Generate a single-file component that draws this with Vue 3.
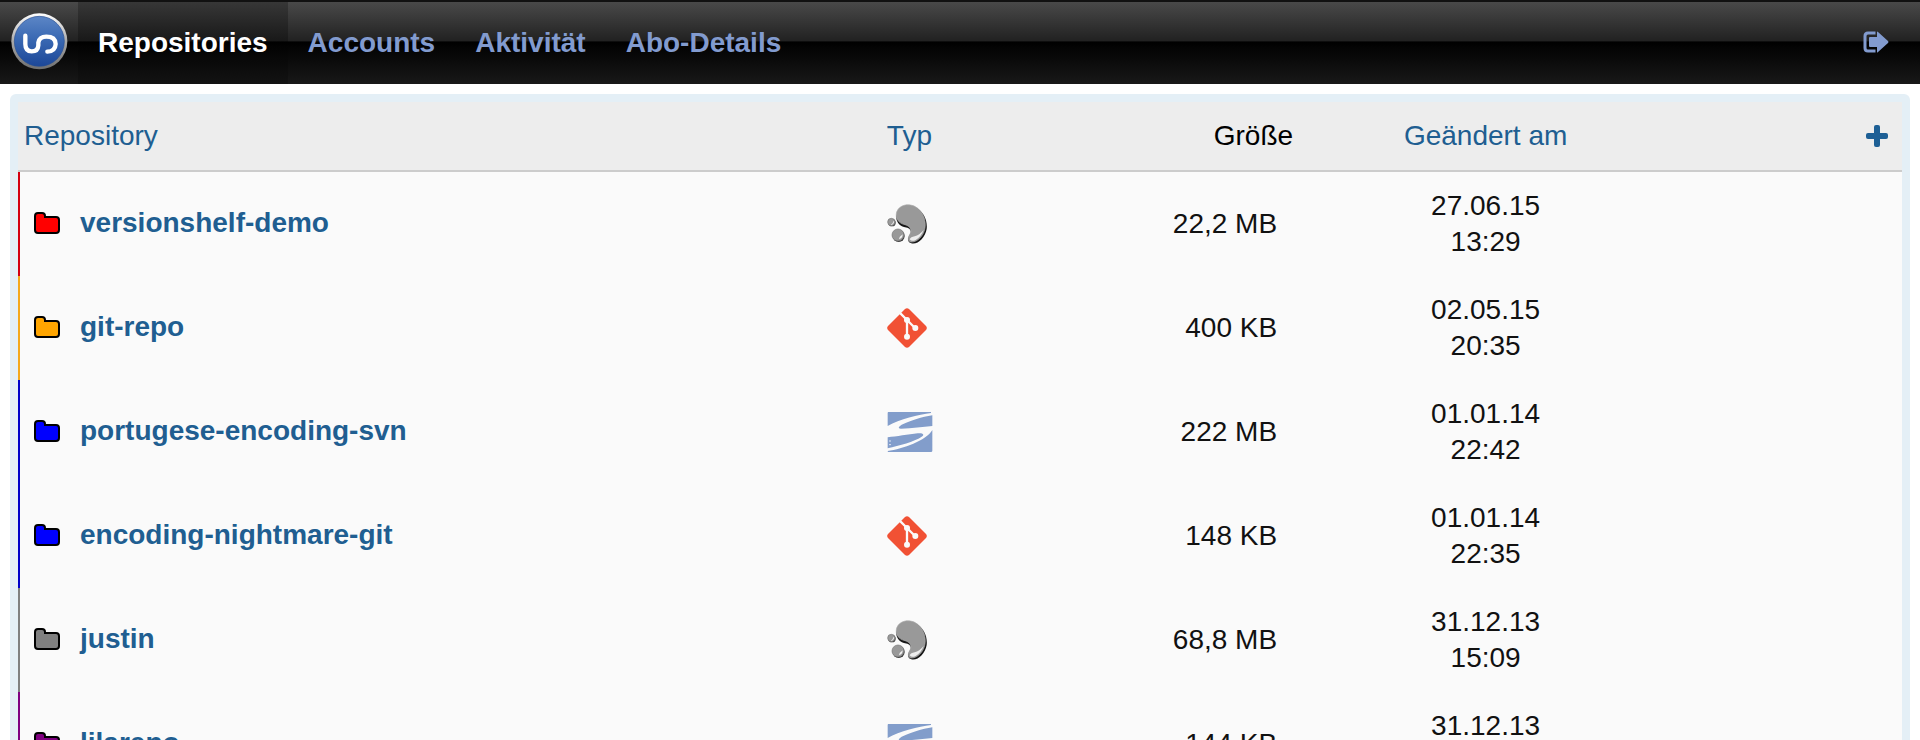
<script setup>
const navItems = [
  { label: 'Repositories', active: true },
  { label: 'Accounts', active: false },
  { label: 'Aktivität', active: false },
  { label: 'Abo-Details', active: false },
]

const repos = [
  { name: 'versionshelf-demo', tone: 'red', type: 'hg', size: '22,2 MB', date: '27.06.15', time: '13:29' },
  { name: 'git-repo', tone: 'orange', type: 'git', size: '400 KB', date: '02.05.15', time: '20:35' },
  { name: 'portugese-encoding-svn', tone: 'blue', type: 'svn', size: '222 MB', date: '01.01.14', time: '22:42' },
  { name: 'encoding-nightmare-git', tone: 'blue', type: 'git', size: '148 KB', date: '01.01.14', time: '22:35' },
  { name: 'justin', tone: 'gray', type: 'hg', size: '68,8 MB', date: '31.12.13', time: '15:09' },
  { name: 'lilarepo', tone: 'purple', type: 'svn', size: '144 KB', date: '31.12.13', time: '15:07' },
]
</script>

<template>
  <div class="page">
    <header class="topbar">
      <a class="brand" href="#" aria-label="Startseite">
        <svg width="60" height="60" viewBox="0 0 180 180">
          <defs>
            <linearGradient id="rim" x1="0" y1="0" x2="0" y2="1">
              <stop offset="0" stop-color="#ffffff" />
              <stop offset="0.5" stop-color="#a9a9a9" />
              <stop offset="1" stop-color="#6f6f6f" />
            </linearGradient>
            <linearGradient id="disc" x1="0" y1="0" x2="0" y2="1">
              <stop offset="0" stop-color="#5c86c6" />
              <stop offset="0.45" stop-color="#3a69b3" />
              <stop offset="1" stop-color="#1c4798" />
            </linearGradient>
          </defs>
          <circle cx="88" cy="88" r="84" fill="url(#rim)" />
          <circle cx="88" cy="88" r="75" fill="url(#disc)" stroke="#274f93" stroke-width="2" />
          <path
            d="M46 71V96Q46 118 65 118Q84 118 85 100V92Q88 74 109 74Q136 74 137 96Q136 118 112 119"
            fill="none" stroke="#fff" stroke-width="13" stroke-linecap="round" stroke-linejoin="round"
          />
        </svg>
      </a>
      <nav class="nav">
        <a v-for="item in navItems" :key="item.label" href="#" class="nav-link" :class="{ active: item.active }">{{ item.label }}</a>
      </nav>
      <button class="icon-button logout" type="button" aria-label="Abmelden">
        <svg width="26" height="22" viewBox="0 0 26 22">
          <path d="M11 2H5Q2 2 2 5V17Q2 20 5 20H11" fill="none" stroke="#829bcf" stroke-width="3" stroke-linecap="square" />
          <path d="M6 7Q6 6 7 6H14V1Q14 0 15 1L25 10Q26 11 25 12L15 21Q14 22 14 21V16H7Q6 16 6 15Z" fill="#829bcf" />
        </svg>
      </button>
    </header>

    <main class="panel">
      <table class="repos">
        <colgroup>
          <col class="col-name" />
          <col class="col-type" />
          <col class="col-size" />
          <col class="col-date" />
          <col class="col-add" />
        </colgroup>
        <thead>
          <tr>
            <th scope="col"><a href="#">Repository</a></th>
            <th scope="col"><a href="#">Typ</a></th>
            <th scope="col" class="size">Größe</th>
            <th scope="col" class="date"><a href="#">Geändert am</a></th>
            <th scope="col" class="add">
              <button class="icon-button" type="button" aria-label="Neues Repository">
                <svg width="22" height="22" viewBox="0 0 22 22" fill="#1d5f95">
                  <rect x="8" y="0" width="6" height="22" rx="2" />
                  <rect x="0" y="8" width="22" height="6" rx="2" />
                </svg>
              </button>
            </th>
          </tr>
        </thead>
        <tbody>
          <tr v-for="repo in repos" :key="repo.name" :class="repo.tone">
            <td class="name">
              <div class="name-line">
                <svg class="folder" width="26" height="22" viewBox="0 0 26 22">
                  <path
                    d="M1 4Q1 1 4 1H8Q11 1 11 4V5H22Q25 5 25 8V18Q25 21 22 21H4Q1 21 1 18Z"
                    stroke="#000" stroke-width="2"
                  />
                </svg>
                <a href="#">{{ repo.name }}</a>
              </div>
            </td>
            <td class="type">
              <svg v-if="repo.type === 'hg'" width="40" height="40" viewBox="18 24 120 120" role="img" aria-label="Mercurial">
                <circle cx="33" cy="80" r="11" fill="#333" />
                <circle cx="31" cy="78" r="11" fill="#999" stroke="#777" stroke-width="2" />
                <path d="M31 86Q38 84 38 76" fill="none" stroke="#eee" stroke-width="3" />
                <circle cx="53" cy="120" r="18" fill="#333" />
                <circle cx="51" cy="117" r="18" fill="#999" stroke="#777" stroke-width="2" />
                <path d="M54 130Q65 127 65 115Q56 121 54 130Z" fill="#f4f4f4" />
                <path
                  d="M49 52C58 26 84 24 103 34C128 47 140 73 137 99C133 125 110 147 91 142C77 138 80 124 88 114C93 104 86 96 72 94C52 90 40 70 49 52Z"
                  fill="#161616"
                />
                <path
                  d="M47 48C55 26 82 22 101 31C125 44 136 70 132 96C128 121 107 140 89 138C78 134 82 122 88 112C93 99 86 90 72 86C52 82 42 66 47 48Z"
                  fill="#999" stroke="#aaa" stroke-width="2"
                />
                <path d="M86 130Q89 123 101 121Q115 118 128 102Q120 123 104 132Q92 138 86 130Z" fill="#ededed" />
              </svg>
              <svg v-else-if="repo.type === 'git'" width="40" height="40" viewBox="0 0 120 120" role="img" aria-label="Git">
                <path d="M54 3Q60 -2 66 3L117 54Q122 60 117 66L66 117Q60 122 54 117L3 66Q-2 60 3 54Z" fill="#f15134" />
                <path d="M38 14L60 36L84 60M60 36V84" fill="none" stroke="#fafafa" stroke-width="7" />
                <circle cx="60" cy="36" r="9" fill="#fafafa" />
                <circle cx="85" cy="60" r="9" fill="#fafafa" />
                <circle cx="60" cy="86" r="9" fill="#fafafa" />
              </svg>
              <svg v-else width="46" height="40" viewBox="0 0 138 120" role="img" aria-label="Subversion">
                <g fill="#829dcb">
                  <path d="M4 0H132V3C95 7 38 22 2 42V4Q2 0 4 0Z" />
                  <path d="M136 10V42C107 44 76 49 42 50C31 50 34 43 49 36C70 26 105 15 136 10Z" />
                  <path d="M2 76C28 73 64 68 92 64C109 62 114 69 103 75C82 89 37 101 2 109Z" />
                  <path d="M136 54V116Q136 120 132 120H4Q2 120 2 117C48 110 117 87 136 54Z" />
                </g>
                <path d="M6 87H12M6 98H12" stroke="#dfe7f4" stroke-width="3" />
              </svg>
            </td>
            <td class="size">{{ repo.size }}</td>
            <td class="date">{{ repo.date }}<br />{{ repo.time }}</td>
            <td></td>
          </tr>
        </tbody>
      </table>
    </main>
  </div>
</template>

<style>
html {
  scrollbar-width: none;
}

body {
  margin: 0;
  background: #fff;
}
</style>

<style scoped>
.page {
  font-family: "Liberation Sans", Arial, Helvetica, sans-serif;
  font-size: 28px;
  line-height: 36px;
  color: #111;
}

a {
  color: #205e91;
  text-decoration: none;
}

svg {
  display: block;
}

.topbar {
  display: flex;
  align-items: stretch;
  box-sizing: border-box;
  height: 84px;
  border-top: 2px solid #111;
  background: linear-gradient(#494949, #222 47%, #000 49%, #030303 54%, #181818);
}

.brand {
  box-sizing: border-box;
  width: 78px;
  padding: 10px;
}

.nav {
  display: flex;
}

.nav-link {
  display: flex;
  align-items: center;
  padding: 0 20px;
  font-weight: bold;
  color: #829bcf;
}

.nav-link.active {
  color: #fff;
  background: linear-gradient(#373737, #191919 47%, #000 49%, #030303 54%, #131313);
}

.icon-button {
  padding: 0;
  border: 0;
  background: none;
  cursor: pointer;
}

.logout {
  margin-left: auto;
  padding: 0 31px 2px;
}

.panel {
  margin: 10px;
  padding: 8px;
  border-radius: 6px;
  background: #e4eff6;
}

.repos {
  width: 100%;
  table-layout: fixed;
  border-collapse: separate;
  border-spacing: 0;
  background: #fafafa;
}

.col-name {
  width: 45.8%;
}

.col-type {
  width: 10%;
}

.col-size {
  width: 12.2%;
}

.col-date {
  width: 19.8%;
}

th {
  padding: 16px 6px;
  border-bottom: 2px solid #ccc;
  background: #ededed;
  font-weight: normal;
  text-align: left;
  color: #000;
}

td {
  padding: 16px 6px;
}

.size {
  text-align: right;
}

td.size {
  padding-right: 22px;
}

.date {
  text-align: center;
}

.add .icon-button {
  display: block;
  margin: 0 8px 0 auto;
}

.name {
  padding: 15px 14px 17px;
  border-left: 2px solid;
  font-weight: bold;
}

.name-line {
  display: flex;
  align-items: center;
  gap: 20px;
}

.red .name { border-color: #d40010; }
.orange .name { border-color: #f5a81c; }
.blue .name { border-color: #0000c8; }
.gray .name { border-color: #808080; }
.purple .name { border-color: #800080; }

.red .folder { fill: #f00; }
.orange .folder { fill: #ffa500; }
.blue .folder { fill: #00f; }
.gray .folder { fill: #808080; }
.purple .folder { fill: #800080; }
</style>
